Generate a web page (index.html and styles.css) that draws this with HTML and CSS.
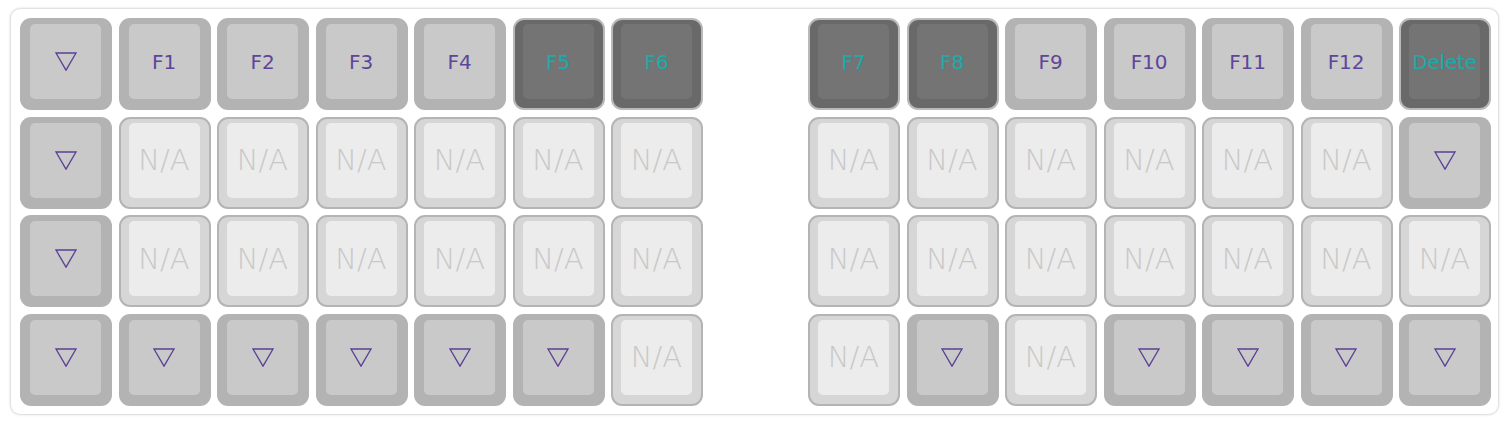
FILE: index.html
```html
<!DOCTYPE html>
<html>
<head>
<meta charset="utf-8">
<link rel="stylesheet" href="styles.css">
</head>
<body>
<div class="card">
  <div class="board" id="board"></div>
</div>
<script src="app.js"></script>
</body>
</html>
```
FILE: styles.css
```css
html, body {
  margin: 0;
  padding: 0;
  background: #ffffff;
}
body {
  font-family: "DejaVu Sans", sans-serif;
}
.card {
  margin: 9px 10px 9px 11px;
  width: 1487px;
  box-sizing: border-box;
  padding: 9px 8px 8px 9px;
  background: #fff;
  border-radius: 9px;
  box-shadow: 0 0 3px rgba(0, 0, 0, 0.32);
}
.board {
  display: grid;
  grid-template-columns: repeat(15, 92px);
  grid-auto-rows: 92px;
  column-gap: 6.5px;
  row-gap: 6.5px;
}
.gap {
  width: 92px;
}
.key {
  box-sizing: border-box;
  border-radius: 11px;
  padding: 6px 11px 11px 10px;
  display: flex;
  background: #b3b3b3;
}
.face {
  flex: 1;
  border-radius: 5px;
  background: #c8c9c8;
  display: flex;
  align-items: center;
  justify-content: center;
  font-size: 20px;
  font-weight: 400;
  color: #5e459a;
  white-space: nowrap;
  letter-spacing: -0.2px;
}
.key.na {
  background: #d6d6d6;
  border: 2px solid #b4b4b4;
  padding: 4px 9px 9px 8px;
}
.key.na .face {
  background: #ececec;
  color: #c9c8c8;
  font-size: 29px;
  font-weight: 300;
  letter-spacing: 0;
}
.key.dark {
  background: #686968;
  border: 2px solid #b9b9b9;
  padding: 4px 9px 9px 8px;
}
.key.dark .face {
  background: #737473;
  color: #1aabab;
}
.tri {
  width: 22px;
  height: 19px;
  display: block;
}
```
FILE: app.js
```js
const rows = [
  ["T","F1","F2","F3","F4","*F5","*F6",null,"*F7","*F8","F9","F10","F11","F12","*Delete"],
  ["T","N","N","N","N","N","N",null,"N","N","N","N","N","N","T"],
  ["T","N","N","N","N","N","N",null,"N","N","N","N","N","N","N"],
  ["T","T","T","T","T","T","N",null,"N","T","N","T","T","T","T"]
];
const board = document.getElementById("board");
const tri = '<svg class="tri" viewBox="0 0 22 19"><polygon points="1,1 21,1 11,18.2" fill="none" stroke="#5b3f95" stroke-width="1.3" stroke-linejoin="miter"/></svg>';
rows.forEach(r => r.forEach(k => {
  const el = document.createElement("div");
  if (k === null) { el.className = "gap"; board.appendChild(el); return; }
  const face = document.createElement("div");
  face.className = "face";
  if (k === "T") { el.className = "key"; face.innerHTML = tri; }
  else if (k === "N") { el.className = "key na"; face.textContent = "N/A"; }
  else if (k[0] === "*") { el.className = "key dark"; face.textContent = k.slice(1); }
  else { el.className = "key"; face.textContent = k; }
  el.appendChild(face);
  board.appendChild(el);
}));
```
